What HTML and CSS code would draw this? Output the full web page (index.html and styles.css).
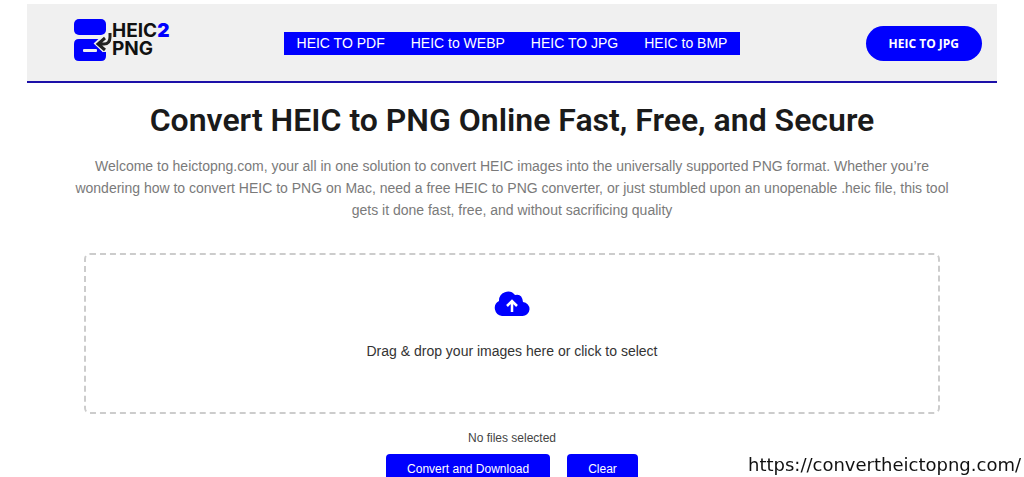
FILE: index.html
```html
<!DOCTYPE html>
<html lang="en">
<head>
<meta charset="utf-8">
<meta name="viewport" content="width=device-width, initial-scale=1">
<title>Convert HEIC to PNG Online</title>
<link rel="stylesheet" href="styles.css">
</head>
<body>
<div class="page">
  <header class="header">
    <a class="logo" href="#" aria-label="HEIC2PNG">
      <svg class="logo-mark" viewBox="0 0 40 42" aria-hidden="true">
        <rect x="0" y="0" width="32" height="16" rx="5" fill="#0000fe"/>
        <path d="M5 20H27L21 25L29 33H32V37Q32 42 27 42H5Q0 42 0 37V25Q0 20 5 20Z" fill="#0000fe"/>
        <rect x="9" y="30" width="14" height="3" rx="1" fill="#f0f0f0"/>
        <path d="M36 13V18Q36 24 30 24H25M31 18L24 24.500L31 31" fill="none" stroke="#f0f0f0" stroke-width="6"/>
        <path d="M36 14V18Q36 25 30 25H25M31 19L24 25L31 31" fill="none" stroke="#222" stroke-width="3"/>
      </svg>
      <span class="logo-text"><span>HEIC<b class="logo-two">2</b></span><span>PNG</span></span>
    </a>
    <nav class="nav">
      <a href="#">HEIC TO PDF</a>
      <a href="#">HEIC to WEBP</a>
      <a href="#">HEIC TO JPG</a>
      <a href="#">HEIC to BMP</a>
    </nav>
    <a class="cta" href="#">HEIC TO JPG</a>
  </header>
  <main class="main">
    <h1 class="title">Convert HEIC to PNG Online Fast, Free, and Secure</h1>
    <p class="intro">Welcome to heictopng.com, your all in one solution to convert HEIC images into the universally supported PNG format. Whether you’re wondering how to convert HEIC to PNG on Mac, need a free HEIC to PNG converter, or just stumbled upon an unopenable .heic file, this tool gets it done fast, free, and without sacrificing quality</p>
    <button class="dropzone" type="button">
      <svg class="cloud" viewBox="0 0 36 26" aria-hidden="true">
        <path d="M8 25A8 8 0 0 1 5 10A9 9 0 0 1 21 4Q28 2 29 11A7 7 0 0 1 28 25Z" fill="#0000fe"/>
        <path d="M18 21V11M13 15L18 10L23 15" fill="none" stroke="#fff" stroke-width="2.500"/>
      </svg>
      <span>Drag &amp; drop your images here or click to select</span>
    </button>
    <p class="status">No files selected</p>
    <div class="actions">
      <button class="action" type="button">Convert and Download</button>
      <button class="action" type="button">Clear</button>
    </div>
  </main>
</div>
<a class="source" href="#">https://convertheictopng.com/</a>
</body>
</html>
```
FILE: styles.css
```css
* { box-sizing: border-box; }
body {
  margin: 0;
  height: 100vh;
  overflow: hidden;
  background: #fff;
  font-family: "Liberation Sans", Arial, sans-serif;
}
a { text-decoration: none; }
.page { padding: 4px 27px 0; }
.header {
  display: grid;
  grid-template-columns: 1fr auto 1fr;
  align-items: center;
  padding: 15px 15px 14px;
  background: #f0f0f0;
  border-bottom: 2px solid #1c10a8;
}
.logo {
  display: flex;
  align-items: center;
  padding: 0 0 6px 32px;
}
.logo-mark { width: 40px; height: 42px; }
.logo-text {
  display: flex;
  flex-direction: column;
  margin-left: -2px;
  font: 700 19px/18px Inter, sans-serif;
  color: #111;
}
.logo-two { color: #0000fe; }
.nav { display: flex; background: #0000fe; }
.nav a {
  padding: 0 13px;
  font-size: 14px;
  line-height: 23px;
  color: #fff;
}
.cta {
  justify-self: end;
  padding: 0 23px;
  border-radius: 18px;
  background: #0000fe;
  font: 700 12px/35px "Open Sans", sans-serif;
  color: #fff;
}
.main { padding: 16px 57px 0; text-align: center; }
.title {
  margin: 0;
  font: 600 32px/42px Roboto, sans-serif;
  color: #1a1a1a;
}
.intro {
  margin: 14px -12px 32px;
  font-size: 14px;
  line-height: 22px;
  color: #7a7a7a;
}
.dropzone {
  display: flex;
  flex-direction: column;
  align-items: center;
  gap: 25px;
  width: 100%;
  padding: 36px 20px 52px;
  border: 2px dashed #ccc;
  border-radius: 6px;
  background: transparent;
  font: 14px/18px "Liberation Sans", Arial, sans-serif;
  color: #333;
}
.cloud { width: 36px; height: 26px; }
.status {
  margin: 15px 0 7px;
  font-size: 12px;
  line-height: 18px;
  color: #444;
}
.actions { display: flex; justify-content: center; gap: 17px; }
.action {
  padding: 0 21px;
  border: 0;
  border-radius: 4px;
  background: #0000fe;
  font: 12px/30px "Liberation Sans", Arial, sans-serif;
  color: #fff;
}
.source {
  position: fixed;
  right: 3px;
  bottom: 1px;
  font: 18px/22px "DejaVu Sans", sans-serif;
  color: #111;
}
```
